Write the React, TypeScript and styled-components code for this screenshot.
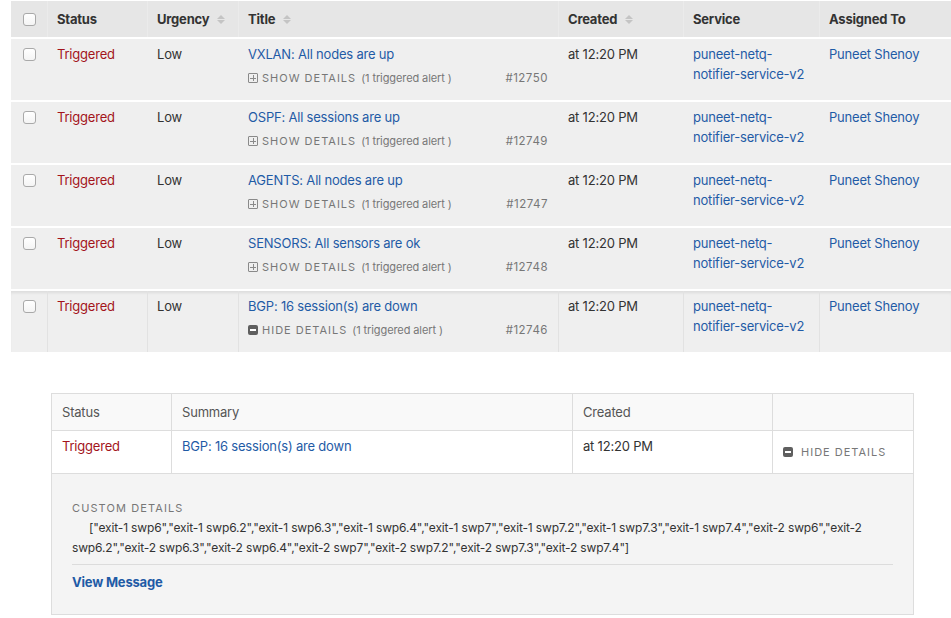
import React from "react";
import styled, { createGlobalStyle, css } from "styled-components";

const Global = createGlobalStyle`
  html, body { margin: 0; padding: 0; background: #fff; }
  body { font-family: Inter, "Liberation Sans", sans-serif; color: #333; font-size: 13px; letter-spacing: -0.2px; }
  * { box-sizing: border-box; }
`;

const COLS = "36px 100px 91px 320px 125px 136px 1fr";

const Table = styled.div`
  margin-left: 11px;
  padding-top: 1px;
`;

const HeaderRow = styled.div`
  display: grid;
  grid-template-columns: ${COLS};
  height: 36px;
  background: #e6e6e6;
  margin-bottom: 2px;
`;

const HeaderCell = styled.div`
  display: flex;
  align-items: center;
  padding: 0 10px;
  font-weight: 700;
  font-size: 13px;
  color: #333;
  box-shadow: inset 1px 0 0 #ebebeb;
  &:first-child { box-shadow: none; justify-content: center; padding: 0; }
`;

const SortIcon = styled.span`
  display: inline-flex;
  flex-direction: column;
  gap: 1px;
  margin-left: 8px;
  &::before, &::after {
    content: "";
    border-left: 4px solid transparent;
    border-right: 4px solid transparent;
  }
  &::before { border-bottom: 4px solid #c4c4c4; }
  &::after { border-top: 4px solid #c4c4c4; }
`;

const Row = styled.div<{ $expanded?: boolean }>`
  display: grid;
  grid-template-columns: ${COLS};
  height: 61px;
  background: #efefef;
  margin-bottom: 2px;
  ${(p) =>
    p.$expanded &&
    css`
      margin-bottom: 0;
      box-shadow: inset 0 3px 3px -1px rgba(0, 0, 0, 0.08);
    `}
`;

const Cell = styled.div<{ $sep?: boolean }>`
  padding: 5px 10px 0;
  line-height: 20px;
  font-size: 13px;
  ${(p) => p.$sep && css`box-shadow: inset 1px 0 0 #e2e2e2;`}
  &:first-child { padding: 9px 0 0; display: flex; justify-content: center; align-items: flex-start; }
`;

const Checkbox = styled.span`
  width: 13px;
  height: 13px;
  border: 1px solid #a9a9a9;
  border-radius: 3px;
  background: linear-gradient(#fff, #f4f4f4);
  display: inline-block;
`;

const Status = styled.span`
  color: #a3141b;
`;

const Link = styled.span`
  color: #1f5ba6;
`;

const DetailLine = styled.div<{ $flat?: boolean }>`
  display: flex;
  align-items: center;
  margin-top: ${(p) => (p.$flat ? 0 : 4)}px;
  font-size: 11px;
  color: #777;
  letter-spacing: 0;
`;

const Toggle = styled.span<{ $gap?: number }>`
  letter-spacing: 1px;
  text-transform: uppercase;
  font-size: 11px;
  display: inline-flex;
  align-items: center;
  gap: ${(p) => p.$gap ?? 4}px;
`;

const PlusBox = styled.span`
  width: 10px;
  height: 10px;
  border: 1px solid #8a8a8a;
  border-radius: 1px;
  position: relative;
  &::before, &::after { content: ""; position: absolute; background: #8a8a8a; }
  &::before { left: 1px; right: 1px; top: 3.5px; height: 1px; }
  &::after { top: 1px; bottom: 1px; left: 3.5px; width: 1px; }
`;

const MinusBox = styled.span`
  width: 10px;
  height: 10px;
  border-radius: 2px;
  background: #5f5f5f;
  position: relative;
  &::before { content: ""; position: absolute; left: 2px; right: 2px; top: 4px; height: 2px; background: #fff; }
`;

const Count = styled.span`
  font-size: 11px;
  margin-left: 5px;
  letter-spacing: -0.1px;
  color: #777;
`;

const Num = styled.span`
  margin-left: auto;
  font-size: 11.5px;
  letter-spacing: 0.5px;
  color: #777;
`;

const Expansion = styled.div`
  padding: 41px 37px 4px 40px;
`;

const Panel = styled.div`
  border: 1px solid #dddddd;
`;

const PCOLS = "119px 401px 200px 1fr";

const PanelHead = styled.div`
  display: grid;
  grid-template-columns: ${PCOLS};
  height: 37px;
  background: #f9f9f9;
  border-bottom: 1px solid #dddddd;
`;

const PanelHeadCell = styled.div`
  display: flex;
  align-items: center;
  padding: 0 10px;
  font-size: 13px;
  color: #555;
  & + & { border-left: 1px solid #dddddd; }
`;

const PanelRow = styled.div`
  display: grid;
  grid-template-columns: ${PCOLS};
  height: 43px;
  background: #fff;
  border-bottom: 1px solid #dddddd;
`;

const PanelCell = styled.div<{ $middle?: boolean }>`
  padding: 5px 10px 0;
  line-height: 20px;
  font-size: 13px;
  & + & { border-left: 1px solid #dddddd; }
  ${(p) =>
    p.$middle &&
    css`
      display: flex;
      align-items: center;
      padding: 0 10px;
    `}
`;

const Custom = styled.div`
  background: #f4f4f4;
  padding: 26px 20px 22px;
`;

const CustomLabel = styled.div`
  font-size: 11px;
  letter-spacing: 1.1px;
  color: #777;
  text-transform: uppercase;
  line-height: 16px;
`;

const CustomValue = styled.div`
  font-size: 12px;
  letter-spacing: -0.15px;
  line-height: 20px;
  color: #333;
  text-indent: 17px;
  margin-top: 2px;
  padding-bottom: 6px;
  border-bottom: 1px solid #dcdcdc;
`;

const ViewMessage = styled.div`
  margin-top: 7px;
  font-size: 13px;
  font-weight: 700;
  color: #1f5ba6;
  line-height: 20px;
`;

type Inc = { title: string; num: string };

const incidents: Inc[] = [
  { title: "VXLAN: All nodes are up", num: "#12750" },
  { title: "OSPF: All sessions are up", num: "#12749" },
  { title: "AGENTS: All nodes are up", num: "#12747" },
  { title: "SENSORS: All sensors are ok", num: "#12748" },
];

function IncidentRow({ inc, expanded }: { inc: Inc; expanded?: boolean }) {
  return (
    <Row $expanded={expanded}>
      <Cell>
        <Checkbox />
      </Cell>
      <Cell $sep={expanded}>
        <Status>Triggered</Status>
      </Cell>
      <Cell $sep={expanded}>Low</Cell>
      <Cell $sep={expanded}>
        <Link>{inc.title}</Link>
        <DetailLine>
          <Toggle>
            {expanded ? <MinusBox /> : <PlusBox />}
            {expanded ? "Hide Details" : "Show Details"}
          </Toggle>
          <Count>(1 triggered alert )</Count>
          <Num>{inc.num}</Num>
        </DetailLine>
      </Cell>
      <Cell $sep={expanded}>at 12:20 PM</Cell>
      <Cell $sep={expanded}>
        <Link>puneet-netq-notifier-service-v2</Link>
      </Cell>
      <Cell $sep={expanded}>
        <Link>Puneet Shenoy</Link>
      </Cell>
    </Row>
  );
}

export default function App() {
  return (
    <>
      <Global />
      <Table>
        <HeaderRow>
          <HeaderCell>
            <Checkbox />
          </HeaderCell>
          <HeaderCell>Status</HeaderCell>
          <HeaderCell>
            Urgency
            <SortIcon />
          </HeaderCell>
          <HeaderCell>
            Title
            <SortIcon />
          </HeaderCell>
          <HeaderCell>
            Created
            <SortIcon />
          </HeaderCell>
          <HeaderCell>Service</HeaderCell>
          <HeaderCell>Assigned To</HeaderCell>
        </HeaderRow>
        {incidents.map((inc) => (
          <IncidentRow key={inc.num} inc={inc} />
        ))}
        <IncidentRow inc={{ title: "BGP: 16 session(s) are down", num: "#12746" }} expanded />
        <Expansion>
          <Panel>
            <PanelHead>
              <PanelHeadCell>Status</PanelHeadCell>
              <PanelHeadCell>Summary</PanelHeadCell>
              <PanelHeadCell>Created</PanelHeadCell>
              <PanelHeadCell />
            </PanelHead>
            <PanelRow>
              <PanelCell>
                <Status>Triggered</Status>
              </PanelCell>
              <PanelCell>
                <Link>BGP: 16 session(s) are down</Link>
              </PanelCell>
              <PanelCell>at 12:20 PM</PanelCell>
              <PanelCell $middle>
                <DetailLine $flat>
                  <Toggle $gap={8}>
                    <MinusBox />
                    Hide Details
                  </Toggle>
                </DetailLine>
              </PanelCell>
            </PanelRow>
            <Custom>
              <CustomLabel>Custom Details</CustomLabel>
              <CustomValue>
                ["exit-1 swp6","exit-1 swp6.2","exit-1 swp6.3","exit-1 swp6.4","exit-1 swp7","exit-1 swp7.2","exit-1 swp7.3","exit-1 swp7.4","exit-2 swp6","exit-2 swp6.2","exit-2 swp6.3","exit-2 swp6.4","exit-2 swp7","exit-2 swp7.2","exit-2 swp7.3","exit-2 swp7.4"]
              </CustomValue>
              <ViewMessage>View Message</ViewMessage>
            </Custom>
          </Panel>
        </Expansion>
      </Table>
    </>
  );
}
